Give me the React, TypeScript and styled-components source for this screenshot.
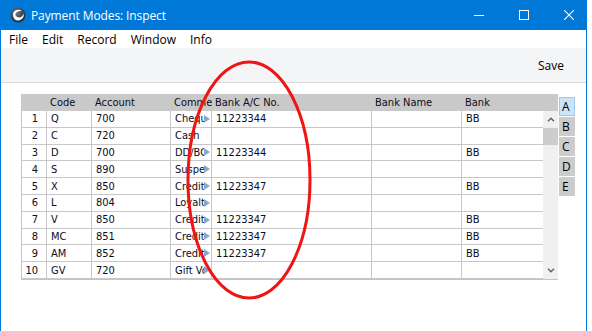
import React from 'react';
import styled, { createGlobalStyle } from 'styled-components';

const GlobalStyle = createGlobalStyle`
  html, body {
    margin: 0;
    padding: 0;
    background: #ffffff;
  }
  body {
    font-family: "Open Sans", "Noto Sans", sans-serif;
  }
`;

type Row = {
  code: string;
  account: string;
  comment: string;
  cut?: boolean;
  acc?: string;
  bank?: string;
};

const rows: Row[] = [
  { code: 'Q', account: '700', comment: 'Cheque', cut: true, acc: '11223344', bank: 'BB' },
  { code: 'C', account: '720', comment: 'Cash' },
  { code: 'D', account: '700', comment: 'DD/BGC', cut: true, acc: '11223344', bank: 'BB' },
  { code: 'S', account: '890', comment: 'Suspense', cut: true },
  { code: 'X', account: '850', comment: 'Credit card', cut: true, acc: '11223347', bank: 'BB' },
  { code: 'L', account: '804', comment: 'Loyalty', cut: true },
  { code: 'V', account: '850', comment: 'Credit card', cut: true, acc: '11223347', bank: 'BB' },
  { code: 'MC', account: '851', comment: 'Credit card', cut: true, acc: '11223347', bank: 'BB' },
  { code: 'AM', account: '852', comment: 'Credit card', cut: true, acc: '11223347', bank: 'BB' },
  { code: 'GV', account: '720', comment: 'Gift Voucher', cut: true },
];

const tabs = ['A', 'B', 'C', 'D', 'E'];

const COLS = '26px 45px 79px 41px 160px 90px 81px';

const Screen = styled.div`
  width: 592px;
  height: 331px;
  overflow: hidden;
  display: flex;
  background: #ffffff;
`;

const Window = styled.div`
  position: relative;
  width: 587px;
  height: 331px;
  box-sizing: border-box;
  border-left: 1px solid #0078d7;
  border-right: 1px solid #0078d7;
  display: flex;
  flex-direction: column;
`;

const TitleBar = styled.div`
  height: 30px;
  flex: none;
  background: #0078d7;
  display: flex;
  align-items: center;
  padding-left: 9px;
  color: #ffffff;
  font-size: 12px;
`;

const Title = styled.span`
  margin-left: 5px;
  flex: 1;
  letter-spacing: -0.1px;
`;

const Controls = styled.div`
  display: flex;
  align-items: center;
  gap: 35px;
  padding-right: 12px;
`;

const MenuBar = styled.div`
  height: 18px;
  flex: none;
  display: flex;
  align-items: center;
  gap: 14px;
  padding-left: 8px;
  font-size: 12px;
  color: #000000;
  background: #ffffff;
`;

const Toolbar = styled.div`
  height: 34px;
  flex: none;
  background: #f4f5f7;
  border-bottom: 1px solid #dadada;
  display: flex;
  align-items: center;
  justify-content: flex-end;
  padding-right: 22px;
  font-size: 12px;
  color: #000000;
`;

const Content = styled.div`
  flex: 1;
  display: flex;
  align-items: flex-start;
  gap: 1px;
  padding: 11px 0 0 20px;
  font-family: "DejaVu Sans Condensed", "DejaVu Sans", sans-serif;
  font-size: 11px;
  color: #0c0c1c;
`;

const Table = styled.div`
  width: 537px;
  display: flex;
  flex-direction: column;
`;

const HeaderRow = styled.div`
  height: 17px;
  background: #c9c9c9;
  display: grid;
  grid-template-columns: ${COLS} 15px;
  align-items: center;
`;

const HeadCell = styled.div`
  padding-left: 3px;
  white-space: nowrap;
  overflow: hidden;
`;

const Body = styled.div`
  display: flex;
  border-left: 1px solid #c4c4c4;
  border-right: 1px solid #c4c4c4;
  border-bottom: 1px solid #c4c4c4;
`;

const Grid = styled.div`
  flex: 1;
  display: grid;
  grid-template-columns: 25px 45px 79px 41px 160px 90px 81px;
  grid-auto-rows: 16.8px;
`;

const Cell = styled.div<{ $num?: boolean; $last?: boolean }>`
  box-sizing: border-box;
  border-bottom: 1px solid #c8c8c8;
  border-right: ${(p) => (p.$last ? 'none' : '1px solid #c8c8c8')};
  display: flex;
  align-items: center;
  justify-content: ${(p) => (p.$num ? 'flex-end' : 'flex-start')};
  padding: ${(p) => (p.$num ? '0 8px 0 0' : '0 0 0 4px')};
  white-space: nowrap;
  overflow: hidden;
`;

const Clip = styled.span`
  flex: 1;
  overflow: hidden;
`;

const More = styled.span`
  flex: none;
  width: 0;
  height: 0;
  margin-right: 1px;
  border-top: 4px solid transparent;
  border-bottom: 4px solid transparent;
  border-left: 6px solid #8ba7c7;
`;

const Scroll = styled.div`
  width: 15px;
  flex: none;
  background: #f0f0f0;
  display: flex;
  flex-direction: column;
  align-items: center;
`;

const Arrow = styled.div`
  height: 17px;
  width: 15px;
  display: flex;
  align-items: center;
  justify-content: center;
`;

const Thumb = styled.div`
  width: 15px;
  height: 17px;
  background: #cdcdcd;
`;

const Spacer = styled.div`
  flex: 1;
`;

const Tabs = styled.div`
  margin-top: 3px;
  display: flex;
  flex-direction: column;
  gap: 1px;
`;

const Tab = styled.div<{ $active?: boolean }>`
  width: 16px;
  height: 19px;
  box-sizing: border-box;
  background: ${(p) => (p.$active ? '#cce4f7' : '#cccccc')};
  border: 1px solid ${(p) => (p.$active ? '#99c9ef' : '#cccccc')};
  display: flex;
  align-items: center;
  padding-left: 2px;
  font-family: "Open Sans", "Noto Sans", sans-serif;
  font-size: 12px;
  color: #000000;
`;

const Ellipse = styled.svg`
  position: absolute;
  left: 184px;
  top: 59px;
  pointer-events: none;
`;

const Logo = () => (
  <svg width="16" height="16" viewBox="0 0 16 16">
    <defs>
      <radialGradient id="lg" cx="0.4" cy="0.35" r="0.7">
        <stop offset="0" stopColor="#6c7c8c" />
        <stop offset="1" stopColor="#1a2530" />
      </radialGradient>
    </defs>
    <circle cx="8" cy="8" r="7.5" fill="url(#lg)" />
    <path d="M3.2 6.2 C4 2.6 9.5 1.6 12.4 4.4 C10.2 3.4 6.8 3.9 5.6 6.6 C4.8 8.6 6.6 10.6 9.4 10.4 C11.8 10.2 13.4 8.4 13.6 6.6 C14.6 10.4 11.4 13.8 7.6 13.4 C4.2 13 2.6 9.6 3.2 6.2 Z" fill="#ffffff" />
  </svg>
);

const Minimize = () => (
  <svg width="10" height="10" viewBox="0 0 10 10">
    <path d="M0 5.5 H10" stroke="#ffffff" strokeWidth="1" />
  </svg>
);

const Maximize = () => (
  <svg width="10" height="10" viewBox="0 0 10 10">
    <rect x="0.5" y="0.5" width="9" height="9" fill="none" stroke="#ffffff" strokeWidth="1" />
  </svg>
);

const Close = () => (
  <svg width="10" height="10" viewBox="0 0 10 10">
    <path d="M0 0 L10 10 M10 0 L0 10" stroke="#ffffff" strokeWidth="1.1" />
  </svg>
);

const Chevron = ({ up }: { up?: boolean }) => (
  <svg width="8" height="5" viewBox="0 0 8 5">
    <path
      d={up ? 'M1 4.2 L4 1.2 L7 4.2' : 'M1 0.8 L4 3.8 L7 0.8'}
      fill="none"
      stroke="#606060"
      strokeWidth="1.4"
    />
  </svg>
);

export default function App() {
  return (
    <Screen>
      <GlobalStyle />
      <Window>
        <TitleBar>
          <Logo />
          <Title>Payment Modes: Inspect</Title>
          <Controls>
            <Minimize />
            <Maximize />
            <Close />
          </Controls>
        </TitleBar>
        <MenuBar>
          <span>File</span>
          <span>Edit</span>
          <span>Record</span>
          <span>Window</span>
          <span>Info</span>
        </MenuBar>
        <Toolbar>Save</Toolbar>
        <Content>
          <Table>
            <HeaderRow>
              <HeadCell />
              <HeadCell>Code</HeadCell>
              <HeadCell>Account</HeadCell>
              <HeadCell>Comment</HeadCell>
              <HeadCell>Bank A/C No.</HeadCell>
              <HeadCell>Bank Name</HeadCell>
              <HeadCell>Bank</HeadCell>
              <HeadCell />
            </HeaderRow>
            <Body>
              <Grid>
                {rows.map((r, i) => (
                  <React.Fragment key={r.code}>
                    <Cell $num>{i + 1}</Cell>
                    <Cell>{r.code}</Cell>
                    <Cell>{r.account}</Cell>
                    <Cell>
                      <Clip>{r.comment}</Clip>
                      {r.cut && <More />}
                    </Cell>
                    <Cell>{r.acc}</Cell>
                    <Cell />
                    <Cell $last>{r.bank}</Cell>
                  </React.Fragment>
                ))}
              </Grid>
              <Scroll>
                <Arrow>
                  <Chevron up />
                </Arrow>
                <Thumb />
                <Spacer />
                <Arrow>
                  <Chevron />
                </Arrow>
              </Scroll>
            </Body>
          </Table>
          <Tabs>
            {tabs.map((t, i) => (
              <Tab key={t} $active={i === 0}>
                {t}
              </Tab>
            ))}
          </Tabs>
        </Content>
        <Ellipse width="128" height="244" viewBox="0 0 128 244">
          <ellipse cx="64" cy="121" rx="61" ry="118" fill="none" stroke="#f01414" strokeWidth="3" />
        </Ellipse>
      </Window>
    </Screen>
  );
}
